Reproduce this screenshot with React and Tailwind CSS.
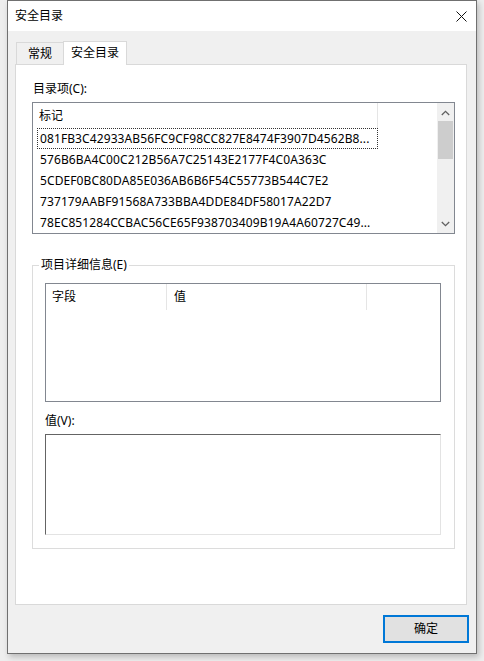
import React from "react";

const rows = [
  "081FB3C42933AB56FC9CF98CC827E8474F3907D4562B8...",
  "576B6BA4C00C212B56A7C25143E2177F4C0A363C",
  "5CDEF0BC80DA85E036AB6B6F54C55773B544C7E2",
  "737179AABF91568A733BBA4DDE84DF58017A22D7",
  "78EC851284CCBAC56CE65F938703409B19A4A60727C49...",
];

function Chevron({ up }) {
  return (
    <svg width="9" height="6" viewBox="0 0 9 6" className="block">
      <path
        d={up ? "M0.8 5 L4.5 1.3 L8.2 5" : "M0.8 1 L4.5 4.7 L8.2 1"}
        fill="none"
        stroke="#606060"
        strokeWidth="1.3"
      />
    </svg>
  );
}

export default function App() {
  return (
    <div
      className="w-[484px] h-[661px] bg-[#eeeeee] pl-[7px] text-[12px] text-black"
      style={{ fontFamily: '"Noto Sans", "Noto Sans CJK SC", sans-serif' }}
    >
      <div className="w-[470px] h-[654px] border border-[#707070] bg-[#f0f0f0] flex flex-col shadow-[2px_3px_6px_rgba(0,0,0,0.22)]">
        {/* title bar */}
        <div className="h-[30px] bg-white flex items-center justify-between pl-[7px] pr-[9px]">
          <span className="leading-[16px]">安全目录</span>
          <svg width="11" height="11" viewBox="0 0 11 11" className="block">
            <path d="M0.5 0.5 L10.5 10.5 M10.5 0.5 L0.5 10.5" stroke="#111" strokeWidth="1" />
          </svg>
        </div>

        {/* body */}
        <div className="flex-1 flex flex-col pl-[7px] pt-[9px]">
          {/* tabs */}
          <div className="h-[24px] flex items-end pl-[1px]">
            <div className="h-[22px] w-[48px] border border-b-0 border-[#d9d9d9] bg-[#f0f0f0] flex items-center justify-center leading-[16px]">
              常规
            </div>
            <div className="h-[24px] w-[64px] -ml-px border border-b-0 border-[#d9d9d9] bg-white flex items-center justify-center leading-[16px] relative z-10 -mb-px pb-[2px]">
              安全目录
            </div>
          </div>

          {/* panel */}
          <div className="w-[452px] h-[541px] border border-[#d9d9d9] bg-white pl-[16px] pt-[16px] flex flex-col">
            <div className="leading-[16px] pl-[1px]">目录项(C):</div>

            {/* listbox */}
            <div className="mt-[5px] w-[423px] h-[132px] border border-[#828790] flex">
              <div className="flex-1 flex flex-col min-w-0">
                <div className="h-[25px] flex items-stretch shrink-0">
                  <div className="w-[345px] border-r border-[#e5e5e5] pl-[6px] flex items-center leading-[16px]">
                    标记
                  </div>
                </div>
                {rows.map((r, i) => (
                  <div key={i} className="h-[21px] flex items-stretch pl-[4px]">
                    <div
                      className={
                        "w-[341px] flex items-center pl-[2px] whitespace-nowrap overflow-hidden leading-[16px] tracking-[0.1px] " +
                        (i === 0 ? "border border-dotted border-[#333]" : "border border-transparent")
                      }
                    >
                      {r}
                    </div>
                  </div>
                ))}
              </div>
              {/* scrollbar */}
              <div className="w-[17px] bg-[#f0f0f0] flex flex-col items-center shrink-0">
                <div className="h-[17px] w-full flex items-center justify-center pt-[2px]">
                  <Chevron up />
                </div>
                <div className="mt-[1px] w-[15px] h-[38px] bg-[#cdcdcd]" />
                <div className="flex-1" />
                <div className="h-[17px] w-full flex items-center justify-center pb-[1px]">
                  <Chevron />
                </div>
              </div>
            </div>

            {/* group box */}
            <div className="mt-[31px] w-[423px] h-[284px] border border-[#dcdcdc] relative pl-[12px] pt-[17px] flex flex-col">
              <span className="absolute left-[6px] top-[-9px] bg-white px-[2px] leading-[16px]">
                项目详细信息(E)
              </span>
              <div className="w-[396px] h-[119px] border border-[#828790] flex flex-col">
                <div className="h-[26px] flex items-stretch">
                  <div className="w-[121px] border-r border-[#e5e5e5] pl-[6px] flex items-center leading-[16px]">
                    字段
                  </div>
                  <div className="w-[200px] border-r border-[#e5e5e5] pl-[7px] flex items-center leading-[16px]">
                    值
                  </div>
                </div>
              </div>
              <div className="mt-[11px] leading-[16px]">值(V):</div>
              <div className="mt-[5px] w-[396px] h-[101px] border border-t-[#646464] border-l-[#646464] border-r-[#e3e3e3] border-b-[#e3e3e3] bg-white" />
            </div>
          </div>

          {/* button row */}
          <div className="mt-[10px] flex justify-end pr-[7px]">
            <div className="w-[86px] h-[28px] border-2 border-[#0078d7] bg-[#e1e1e1] flex items-center justify-center leading-[16px]">
              确定
            </div>
          </div>
        </div>
      </div>
    </div>
  );
}
